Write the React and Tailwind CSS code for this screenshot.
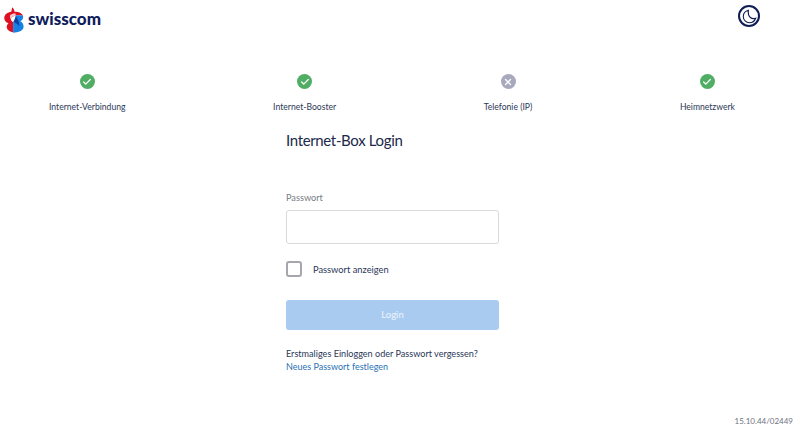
import { Check, X } from "lucide-react";

const statuses = [
  { label: "Internet-Verbindung", ok: true },
  { label: "Internet-Booster", ok: true },
  { label: "Telefonie (IP)", ok: false },
  { label: "Heimnetzwerk", ok: true },
];

const Logo = () => (
  <svg width="20" height="28" viewBox="0 0 22 29" className="shrink-0">
    <path d="M9 0.5 C10.5 2 11.5 3.5 11.5 5.5 C15 5 19.5 6.5 21 10 C19 9 16 9 13 9.5 C9 10.5 7 12 7.5 14 C8 15.5 9.5 16.5 10 17 L10 28 C5.5 27.5 3 25 3 22 C3 20 4.5 18.5 5 18 C2 17 0.3 15 0.3 12.5 C0.3 8.5 4 6 8 5.5 C8.5 3.5 8.7 2 9 0.5 Z" fill="#dd1122" />
    <path d="M13 9.5 C16 9 19 9 21 10 C21.5 12.5 20 15 18 16 C20.5 17.5 21.8 19.5 21.5 22.5 C21 26 16 28.5 10 28.5 L10 17 C12 14 12.5 12 13 9.5 Z" fill="#1781e3" />
    <path d="M10.5 16.5 C12 14 12.5 12 13 10 C15 13 17 17 17 21.5 C15 19 12.5 17.5 10.5 16.5 Z" fill="#0f3f9e" />
    <path d="M6.5 9.5 C8 8 10 7 12.5 7 L13 9.5 C10 10.2 8 11.5 7.5 13.5 C6.8 12.5 6.5 11 6.5 9.5 Z" fill="#f6c6cb" />
  </svg>
);

const StatusItem = ({ label, ok }) => (
  <div className="flex flex-col items-center">
    <div className={`flex h-[15px] w-[15px] items-center justify-center rounded-full ${ok ? "bg-[#4fae63]" : "bg-[#a9a9bd]"}`}>
      {ok ? <Check size={10} strokeWidth={3} color="#fff" /> : <X size={10} strokeWidth={3} color="#fff" />}
    </div>
    <span className="mt-[12px] text-[8.6px] leading-[12px] text-[#2b3857]">{label}</span>
  </div>
);

export default function App() {
  return (
    <div className="relative h-[428px] w-[800px] overflow-hidden bg-white font-['Lato',sans-serif] text-[#2b3857]">
      <header className="flex h-[74px] items-start justify-between pl-[4px] pr-[40px] pt-[5px]">
        <div className="flex items-center gap-[4px] pt-[1px]">
          <Logo />
          <span className="pb-[2px] text-[17px] leading-[26px] font-black text-[#0f1d5c]">swisscom</span>
        </div>
        <button className="flex h-[22px] w-[22px] items-center justify-center rounded-full border-2 border-[#101c54]">
          <svg width="15" height="15" viewBox="0 0 14 14" fill="none" stroke="#101c54" strokeWidth="1">
            <path d="M6 1.2 C3 2 1.2 4.4 1.2 7 C1.2 10.2 3.8 12.8 7 12.8 C9.6 12.8 11.8 11.2 12.8 8.6 C9.5 9.8 5 8 6 1.2 Z" />
          </svg>
        </button>
      </header>

      <div className="flex items-start justify-between pl-[49px] pr-[65px]">
        {statuses.map((s) => (
          <StatusItem key={s.label} {...s} />
        ))}
      </div>

      <main className="mt-[16px] ml-[286px] w-[213px]">
        <h1 className="text-[15px] leading-[22px] tracking-[-0.35px] text-[#1b2a4a]">Internet-Box Login</h1>
        <label className="mt-[40px] block text-[9.2px] leading-[14px] text-[#777b85]">Passwort</label>
        <div className="mt-[5px] h-[34px] w-full rounded-[3px] border border-[#d9d9dd] bg-white" />
        <div className="mt-[17px] flex items-center">
          <div className="h-[16px] w-[16px] rounded-[3px] border-2 border-[#a5a7ad]" />
          <span className="ml-[11px] pt-[1px] text-[9.3px] leading-[14px]">Passwort anzeigen</span>
        </div>
        <button className="mt-[23px] h-[30px] w-full rounded-[3px] bg-[#a9cbf0] pt-[1px] text-[9.5px] text-white/80">Login</button>
        <p className="mt-[17px] text-[9.1px] leading-[13px] whitespace-nowrap">Erstmaliges Einloggen oder Passwort vergessen?</p>
        <a className="block text-[9px] leading-[13px] text-[#2a72b5]">Neues Passwort festlegen</a>
      </main>

      <span className="absolute right-[7px] bottom-[1px] text-[8px] leading-[12px] text-[#6f7280]">15.10.44/02449</span>
    </div>
  );
}
